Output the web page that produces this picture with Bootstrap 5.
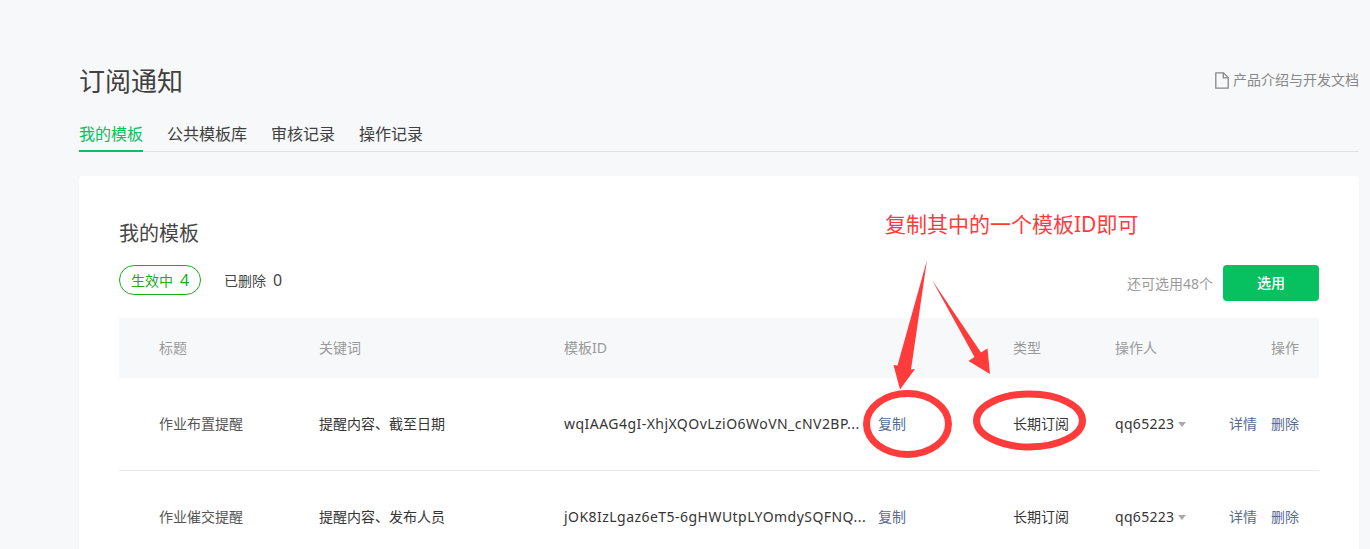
<!DOCTYPE html>
<html lang="zh-CN">
<head>
<meta charset="utf-8">
<title>订阅通知</title>
<link href="https://cdn.jsdelivr.net/npm/bootstrap@5.3.0/dist/css/bootstrap.min.css" rel="stylesheet">
<style>
html,body{height:549px;overflow:hidden}
body{background:#f6f8f9;color:#353535;font-family:"Noto Sans","Noto Sans CJK SC",sans-serif;font-size:14px;position:relative}
.page-wrap{padding:63px 11px 0 79px}
.page-title{font-size:26px;font-weight:400;line-height:36px;margin:0;color:#404040}
.doc-link{color:#888;font-size:14px;line-height:20px;text-decoration:none;margin-top:-2px}
.tab-strip{margin-top:19px;border-bottom:1px solid #e0e2e4;gap:24px;height:34px}
.tab-item{font-size:16px;line-height:22px;color:#404040;height:34px;padding:5px 0 0;text-decoration:none}
.tab-item.is-on{color:#07c160;border-bottom:2px solid #07c160}
.panel{background:#fff;border-radius:4px;margin-top:24px;padding:41px 40px 0;height:500px;box-shadow:0 1px 2px rgba(0,0,0,.03)}
.panel-title{font-size:20px;font-weight:400;line-height:34px;margin:0;color:#454545}
.tool-row{margin-top:14px;height:36px}
.pill-on{border:1px solid #1aad19;border-radius:15px;color:#1aad19;height:30px;line-height:28px;width:82px;text-align:center;text-decoration:none}
.pill-num{margin-left:7px;font-size:16px}
.pill-off{color:#454545;margin-left:23px;line-height:30px;text-decoration:none}
.quota{color:#9a9a9a;margin-right:10px}
.btn-pick{background:#07c160;color:#fff;border:0;border-radius:4px;width:96px;height:36px;font-size:14px;font-weight:500;padding:0 0 1px}
.btn-pick:hover{background:#07c160;color:#fff}
.tpl-table{table-layout:fixed;width:1200px;margin:17px 0 0;font-size:14px;border-collapse:collapse}
.tpl-table th{background:#f6f8f9;color:#9a9a9a;font-weight:400;height:60px;padding:0 0 2px;border:0;vertical-align:middle}
.tpl-table td{height:93px;padding:0;border:0;border-bottom:1px solid #e8e9ea;vertical-align:middle;color:#353535;background:transparent}
.tpl-table tbody tr:first-child td{height:92px}
.tpl-table tr:last-child td{border-bottom:0}
.tpl-table .cell-title{color:#555}
.c1{width:200px;padding-left:40px!important}
.c2{width:245px}
.c3{width:314px}
.c4{width:135px}
.c5{width:102px}
.c6{width:114px}
.c7{width:90px;padding-right:20px!important;text-align:right}
.id-text{display:block;white-space:nowrap;letter-spacing:.46px}
.op-name{letter-spacing:.3px}
.act{color:#576b95;text-decoration:none}
.act-gap{margin-left:14px}
.caret-mini{display:inline-block;border:4px solid transparent;border-top:5px solid #aaa;border-bottom:0;margin-left:4px;vertical-align:2px}
.note-layer{position:absolute;left:0;top:0;width:1370px;height:549px;pointer-events:none}
.note-text{position:absolute;left:885px;top:208px;font-size:21px;line-height:32px;color:#ff3b3b;white-space:nowrap}
</style>
</head>
<body>
<div class="page-wrap">
  <div class="d-flex justify-content-between align-items-center">
    <h1 class="page-title">订阅通知</h1>
    <a class="doc-link d-flex align-items-center" href="#">
      <svg width="14" height="17" viewBox="0 0 14 17" class="me-1" fill="none" stroke="#888" stroke-width="1.3"><path d="M.8.8h7.7l4.7 4.8v10.6H.8z"/><path d="M8.3.8v5h4.9"/></svg>产品介绍与开发文档</a>
  </div>
  <nav class="d-flex tab-strip">
    <a class="tab-item is-on" href="#">我的模板</a>
    <a class="tab-item" href="#">公共模板库</a>
    <a class="tab-item" href="#">审核记录</a>
    <a class="tab-item" href="#">操作记录</a>
  </nav>
  <section class="panel">
    <h2 class="panel-title">我的模板</h2>
    <div class="d-flex justify-content-between tool-row">
      <div class="d-flex align-items-start">
        <a class="pill-on" href="#">生效中<span class="pill-num">4</span></a>
        <a class="pill-off" href="#">已删除<span class="pill-num">0</span></a>
      </div>
      <div class="d-flex align-items-center">
        <span class="quota">还可选用48个</span>
        <button class="btn btn-pick" type="button">选用</button>
      </div>
    </div>
    <table class="table tpl-table">
      <thead>
        <tr><th class="c1">标题</th><th class="c2">关键词</th><th class="c3">模板ID</th><th class="c4"></th><th class="c5">类型</th><th class="c6">操作人</th><th class="c7">操作</th></tr>
      </thead>
      <tbody>
        <tr>
          <td class="c1 cell-title">作业布置提醒</td><td>提醒内容、截至日期</td>
          <td><span class="id-text">wqIAAG4gI-XhjXQOvLziO6WoVN_cNV2BP...</span></td>
          <td><a class="act" href="#">复制</a></td><td>长期订阅</td>
          <td><span class="op-name">qq65223</span><span class="caret-mini"></span></td>
          <td class="c7"><a class="act" href="#">详情</a><a class="act act-gap" href="#">删除</a></td>
        </tr>
        <tr>
          <td class="c1 cell-title">作业催交提醒</td><td>提醒内容、发布人员</td>
          <td><span class="id-text">jOK8IzLgaz6eT5-6gHWUtpLYOmdySQFNQ...</span></td>
          <td><a class="act" href="#">复制</a></td><td>长期订阅</td>
          <td><span class="op-name">qq65223</span><span class="caret-mini"></span></td>
          <td class="c7"><a class="act" href="#">详情</a><a class="act act-gap" href="#">删除</a></td>
        </tr>
      </tbody>
    </table>
  </section>
</div>
<svg class="note-layer" viewBox="0 0 1370 549" fill="none">
  <polygon fill="#ff3b3b" points="927,260 911,369.5 915,369 900,389.5 893.5,365 897.5,365.5"/>
  <polygon fill="#ff3b3b" points="932,280 981,352.5 987.5,348.5 990,374 968.5,361 974.5,357"/>
  <ellipse cx="907.5" cy="424" rx="41" ry="30.5" stroke="#ff3b3b" stroke-width="7"/>
  <ellipse cx="1029.5" cy="420.5" rx="53" ry="26.5" stroke="#ff3b3b" stroke-width="7"/>
</svg>
<div class="note-text">复制其中的一个模板ID即可</div>
</body>
</html>
